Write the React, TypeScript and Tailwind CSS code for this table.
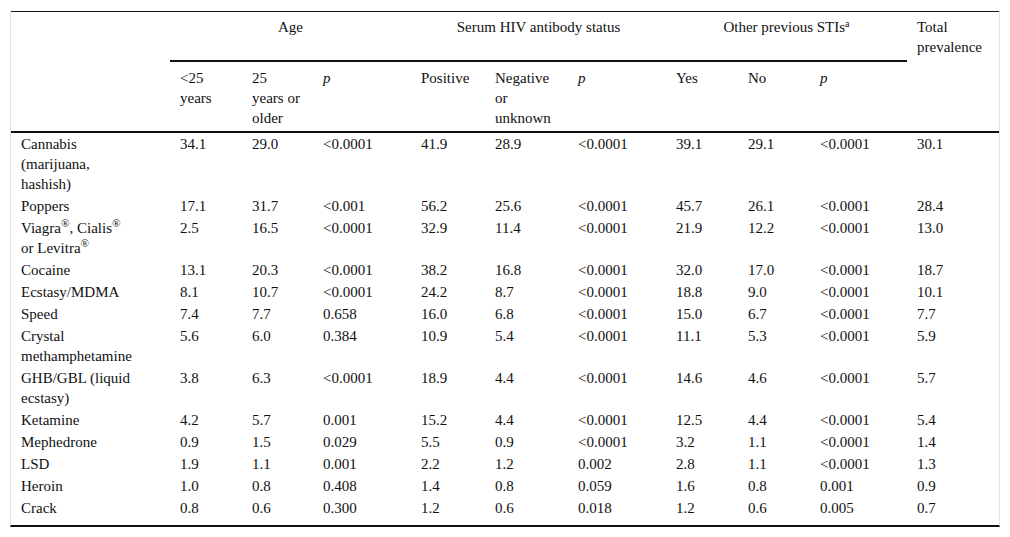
const rows: { label: React.ReactNode; values: string[] }[] = [
  {
    label: "Cannabis (marijuana, hashish)",
    values: ["34.1", "29.0", "<0.0001", "41.9", "28.9", "<0.0001", "39.1", "29.1", "<0.0001", "30.1"],
  },
  {
    label: "Poppers",
    values: ["17.1", "31.7", "<0.001", "56.2", "25.6", "<0.0001", "45.7", "26.1", "<0.0001", "28.4"],
  },
  {
    label: (
      <>
        Viagra<sup>®</sup>, Cialis<sup>®</sup> or Levitra<sup>®</sup>
      </>
    ),
    values: ["2.5", "16.5", "<0.0001", "32.9", "11.4", "<0.0001", "21.9", "12.2", "<0.0001", "13.0"],
  },
  {
    label: "Cocaine",
    values: ["13.1", "20.3", "<0.0001", "38.2", "16.8", "<0.0001", "32.0", "17.0", "<0.0001", "18.7"],
  },
  {
    label: "Ecstasy/MDMA",
    values: ["8.1", "10.7", "<0.0001", "24.2", "8.7", "<0.0001", "18.8", "9.0", "<0.0001", "10.1"],
  },
  {
    label: "Speed",
    values: ["7.4", "7.7", "0.658", "16.0", "6.8", "<0.0001", "15.0", "6.7", "<0.0001", "7.7"],
  },
  {
    label: "Crystal methamphetamine",
    values: ["5.6", "6.0", "0.384", "10.9", "5.4", "<0.0001", "11.1", "5.3", "<0.0001", "5.9"],
  },
  {
    label: "GHB/GBL (liquid ecstasy)",
    values: ["3.8", "6.3", "<0.0001", "18.9", "4.4", "<0.0001", "14.6", "4.6", "<0.0001", "5.7"],
  },
  {
    label: "Ketamine",
    values: ["4.2", "5.7", "0.001", "15.2", "4.4", "<0.0001", "12.5", "4.4", "<0.0001", "5.4"],
  },
  {
    label: "Mephedrone",
    values: ["0.9", "1.5", "0.029", "5.5", "0.9", "<0.0001", "3.2", "1.1", "<0.0001", "1.4"],
  },
  {
    label: "LSD",
    values: ["1.9", "1.1", "0.001", "2.2", "1.2", "0.002", "2.8", "1.1", "<0.0001", "1.3"],
  },
  {
    label: "Heroin",
    values: ["1.0", "0.8", "0.408", "1.4", "0.8", "0.059", "1.6", "0.8", "0.001", "0.9"],
  },
  {
    label: "Crack",
    values: ["0.8", "0.6", "0.300", "1.2", "0.6", "0.018", "1.2", "0.6", "0.005", "0.7"],
  },
];

const colWidths = [159, 72, 71, 98, 74, 83, 98, 72, 72, 97, 92];

export default function App() {
  return (
    <div className="min-h-screen bg-white pt-[11px] font-['Liberation_Serif',serif] text-[15px] leading-[20px] text-[#111]">
      <div className="ml-[10px] w-[990px] border-x border-[#e3e3e3] border-b-2 border-b-[#111] pb-[6px]">
        <table className="w-[988px] table-fixed border-separate border-spacing-0 border-t border-[#111] text-left">
          <colgroup>
            {colWidths.map((w, i) => (
              <col key={i} style={{ width: w }} />
            ))}
          </colgroup>
          <thead>
            <tr className="align-top">
              <th rowSpan={2} className="border-b-2 border-[#111] p-0 font-normal" />
              <th colSpan={3} className="border-b-2 border-[#111] px-[10px] pt-[5px] pb-[23px] text-center font-normal">
                Age
              </th>
              <th colSpan={3} className="border-b-2 border-[#111] px-[10px] pt-[5px] pb-[23px] text-center font-normal">
                Serum HIV antibody status
              </th>
              <th colSpan={3} className="border-b-2 border-[#111] px-[10px] pt-[5px] pb-[23px] text-center font-normal">
                Other previous STIs<sup className="text-[10px]">a</sup>
              </th>
              <th rowSpan={2} className="border-b-2 border-[#111] pl-[10px] pr-[4px] pt-[5px] font-normal">
                Total prevalence
              </th>
            </tr>
            <tr className="align-top">
              <th className="border-b-2 border-[#111] pl-[10px] pt-[6px] pb-[3px] font-normal">
                <div className="w-[49px]">&lt;25 years</div>
              </th>
              <th className="border-b-2 border-[#111] pl-[10px] pt-[6px] pb-[3px] font-normal">
                <div className="w-[49px]">25 years or older</div>
              </th>
              <th className="border-b-2 border-[#111] pl-[10px] pt-[6px] pb-[3px] font-normal italic">p</th>
              <th className="border-b-2 border-[#111] pl-[10px] pt-[6px] pb-[3px] font-normal">Positive</th>
              <th className="border-b-2 border-[#111] pl-[10px] pt-[6px] pb-[3px] font-normal">
                <div className="w-[62px]">Negative or unknown</div>
              </th>
              <th className="border-b-2 border-[#111] pl-[10px] pt-[6px] pb-[3px] font-normal italic">p</th>
              <th className="border-b-2 border-[#111] pl-[10px] pt-[6px] pb-[3px] font-normal">Yes</th>
              <th className="border-b-2 border-[#111] pl-[10px] pt-[6px] pb-[3px] font-normal">No</th>
              <th className="border-b-2 border-[#111] pl-[10px] pt-[6px] pb-[3px] font-normal italic">p</th>
            </tr>
          </thead>
          <tbody>
            {rows.map((row, r) => (
              <tr key={r} className="align-top">
                <td className="pl-[10px] py-[1px]">
                  <div className="w-[113px]">{row.label}</div>
                </td>
                {row.values.map((v, i) => (
                  <td key={i} className="pl-[10px] py-[1px] whitespace-nowrap">
                    {v}
                  </td>
                ))}
              </tr>
            ))}
          </tbody>
        </table>
      </div>
    </div>
  );
}
